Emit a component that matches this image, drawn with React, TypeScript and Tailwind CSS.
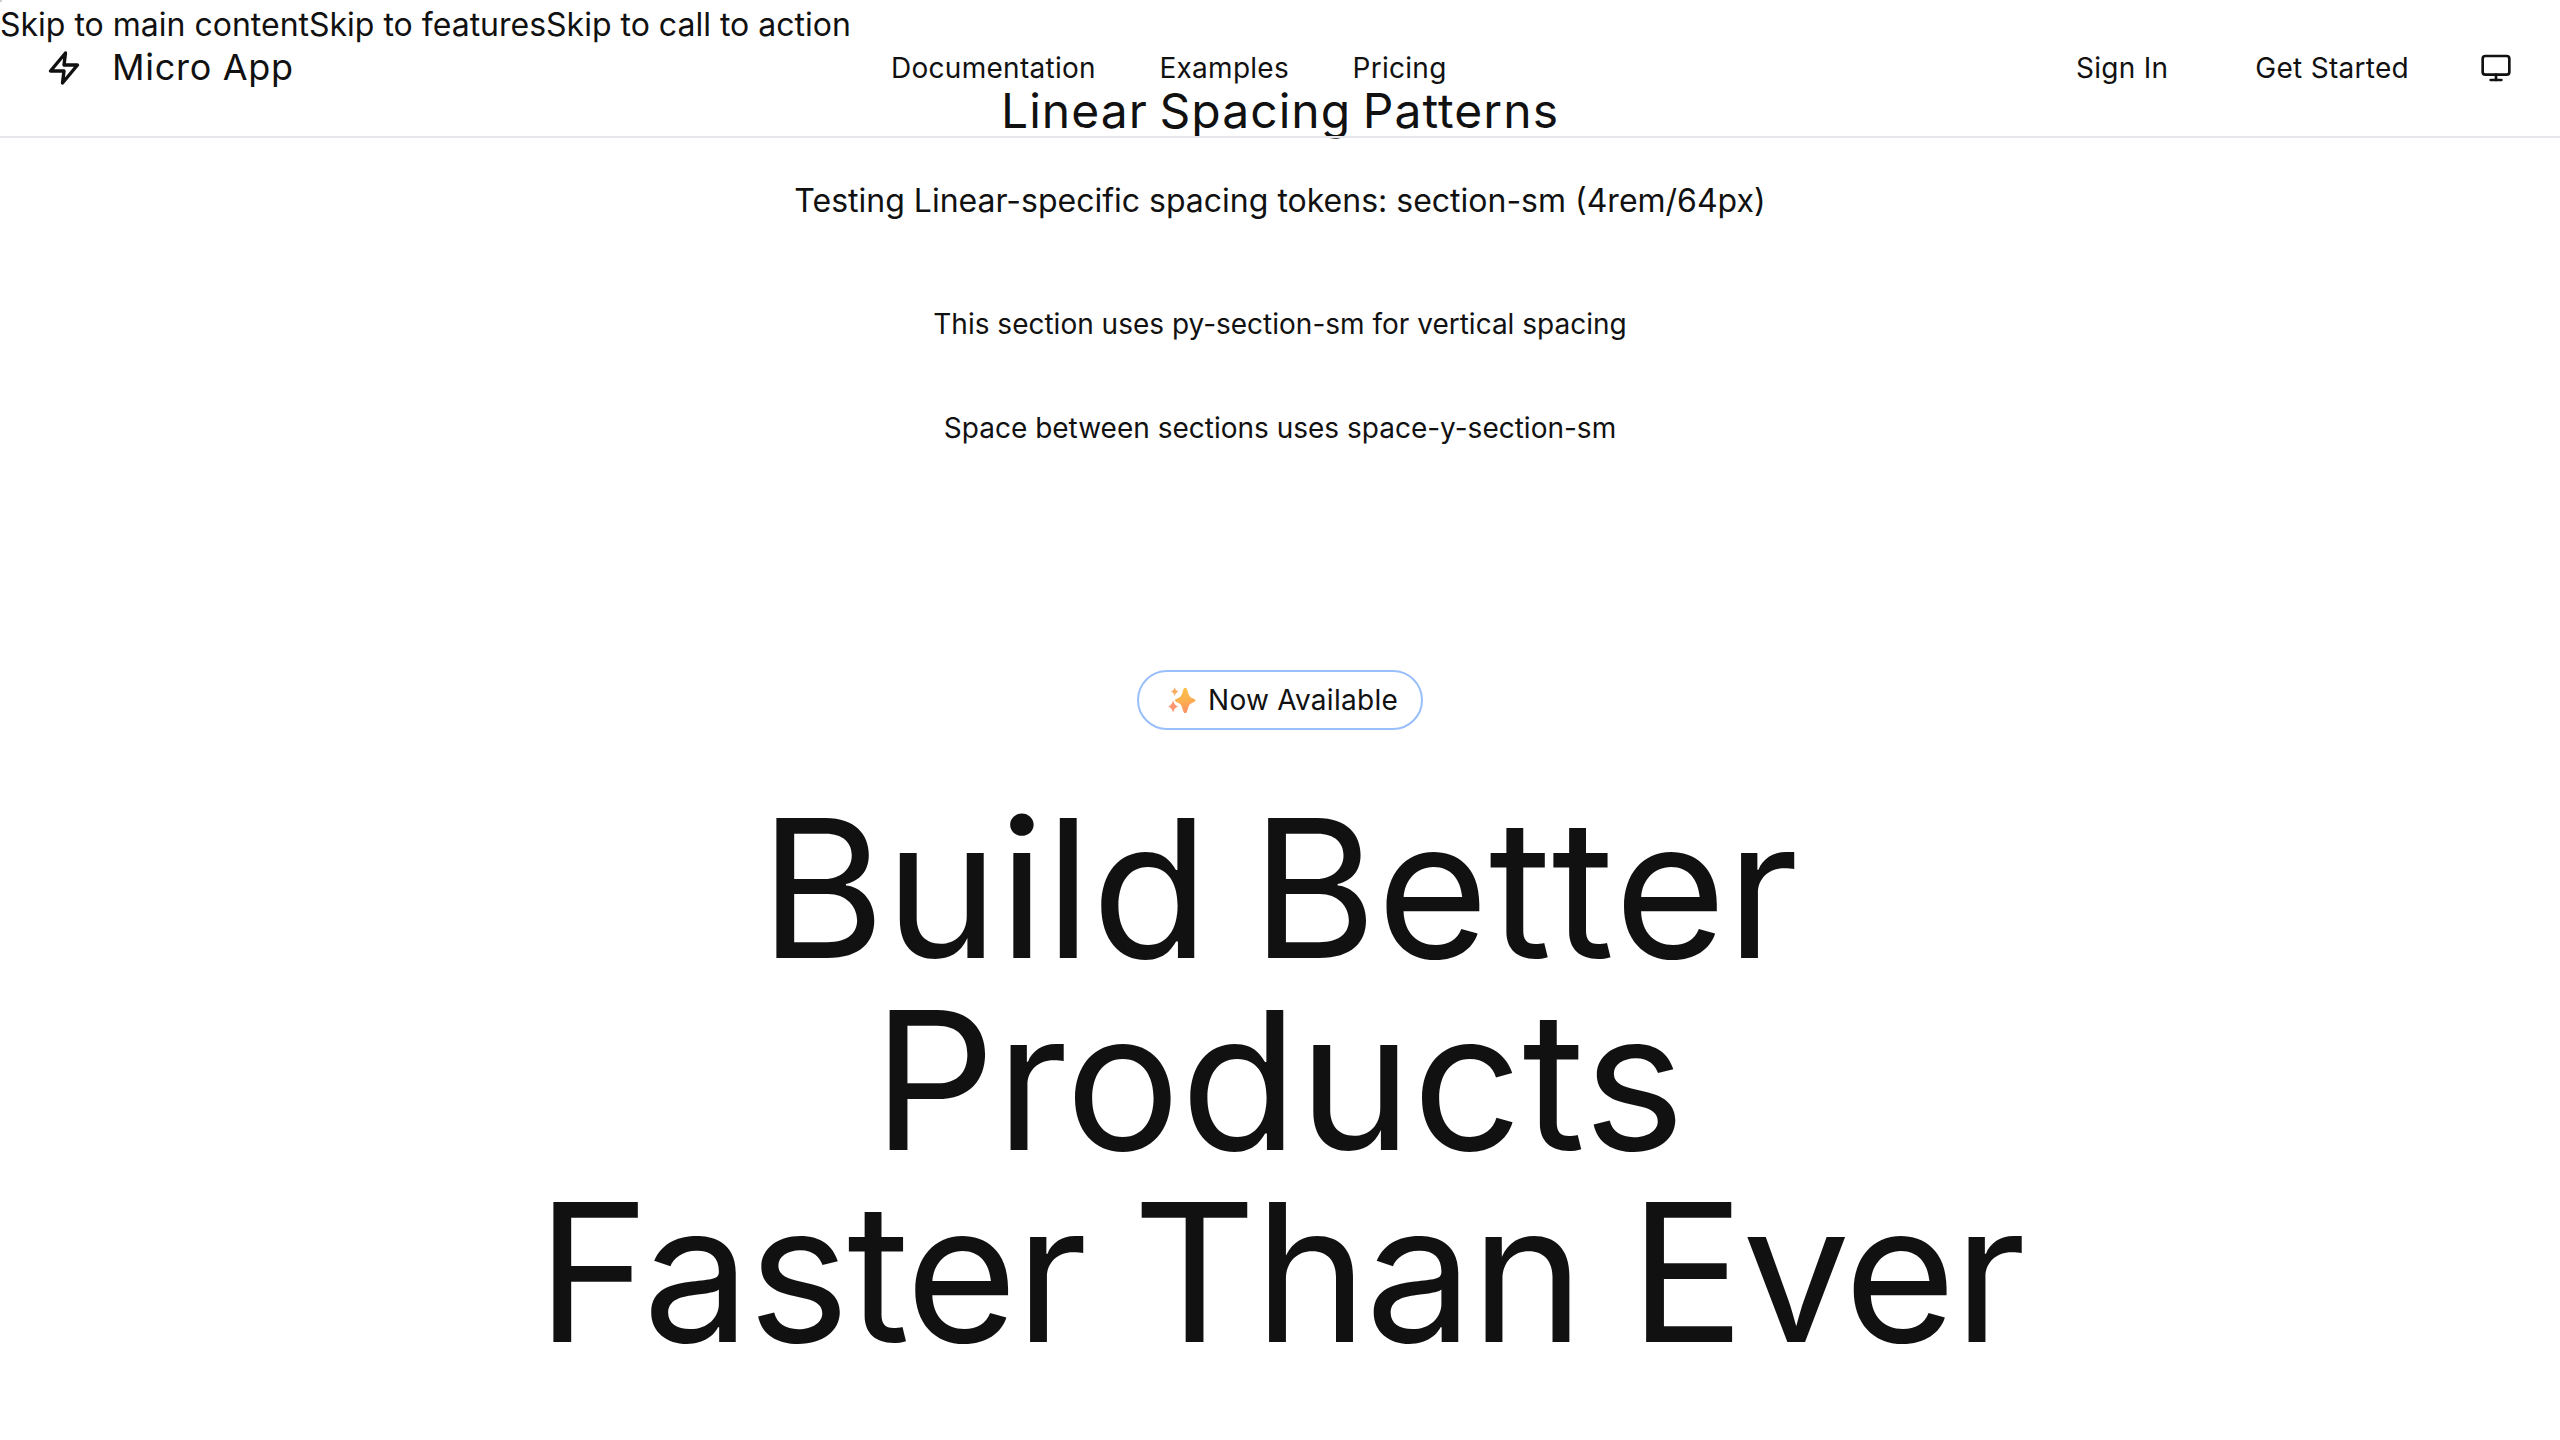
import { Monitor } from "lucide-react";

const skipLinks = ["Skip to main content", "Skip to features", "Skip to call to action"];
const navLinks = ["Documentation", "Examples", "Pricing"];

function BoltIcon() {
  return (
    <svg viewBox="0 0 24 24" className="size-9 shrink-0" fill="none" stroke="currentColor" strokeWidth="2.25" strokeLinecap="round" strokeLinejoin="round" aria-hidden="true">
      <polygon points="13 2 3 14 12 14 11 22 21 10 12 10 13 2" />
    </svg>
  );
}

function SparklesIcon() {
  return (
    <svg viewBox="0 0 28 26" className="h-[26px] w-7 shrink-0" role="img" aria-label="Sparkles">
      <defs>
        <linearGradient id="spark" x1="0.4" y1="0" x2="0.6" y2="1">
          <stop offset="0" stopColor="#fbc04c" />
          <stop offset="0.5" stopColor="#fdb04f" />
          <stop offset="1" stopColor="#fb8d68" />
        </linearGradient>
      </defs>
      <path fill="url(#spark)" d="M17.2 .8C18.5 .8 19 2 19.7 4.4C21 8.8 21.7 9.8 24.3 11C26.4 12 27.5 12.6 27.5 13.4C27.5 14.2 26.4 14.8 24.3 15.8C21.7 17 21 18 19.7 22.4C19 24.8 18.5 26 17.2 26C15.9 26 15.4 24.8 14.7 22.4C13.4 18 12.7 17 10.1 15.8C8 14.8 6.9 14.2 6.9 13.4C6.9 12.6 8 12 10.1 11C12.7 9.8 13.4 8.8 14.7 4.4C15.4 2 15.9 .8 17.2 .8Z" />
      <path fill="#fbab62" d="M6.7 .3C7.5 2.6 8.2 3.7 10.4 4.6C8.2 5.6 7.5 6.7 6.7 8.9C5.9 6.7 5.2 5.6 3 4.6C5.2 3.7 5.9 2.6 6.7 .3Z" />
      <path fill="#fb9670" d="M5.1 13.4C6.1 16.6 7 18.1 10 19.4C7 20.7 6.1 22.2 5.1 25.4C4.1 22.2 3.2 20.7 .2 19.4C3.2 18.1 4.1 16.6 5.1 13.4Z" />
    </svg>
  );
}

function SiteHeader() {
  return (
    <header className="absolute inset-x-0 top-0 z-10 flex h-[138px] items-center border-b-2 border-[#e6e6eb] pr-12 text-[28px] leading-[42px] tracking-[0.01em] whitespace-nowrap">
      <div className="flex w-[891px] items-center gap-[30px] pl-[46px]">
        <BoltIcon />
        <span className="pb-0.5 text-[36px] leading-[54px] tracking-[0.02em]">Micro App</span>
      </div>
      <nav className="flex gap-[63.5px]">
        {navLinks.map((label) => (
          <a key={label}>{label}</a>
        ))}
      </nav>
      <div className="ml-auto flex items-center">
        <a>Sign In</a>
        <a className="ml-[87px]">Get Started</a>
        <Monitor className="ml-[71px] size-8" />
      </div>
    </header>
  );
}

export default function App() {
  return (
    <div className="relative flex h-[1440px] w-full flex-col overflow-hidden bg-white font-['Inter',sans-serif] text-[#111111]">
      <div className="flex h-[87px] shrink-0 pt-px text-[32px] leading-[48px] whitespace-nowrap">
        {skipLinks.map((label) => (
          <a key={label}>{label}</a>
        ))}
      </div>
      <span className="absolute top-0 left-0 size-0.5 bg-[#cfcfcf]" />
      <SiteHeader />

      <section className="text-center">
        <h1 className="text-[48px] leading-[48px] tracking-[1.05px] [word-spacing:-3px]">Linear Spacing Patterns</h1>
        <p className="mt-[42px] text-[32px] leading-[48px]">Testing Linear-specific spacing tokens: section-sm (4rem/64px)</p>
        <p className="mt-[78px] text-[28px] leading-[42px]">This section uses py-section-sm for vertical spacing</p>
        <p className="mt-[62px] text-[28px] leading-[42px]">Space between sections uses space-y-section-sm</p>
      </section>

      <section className="mt-[221px] flex flex-col items-center">
        <div className="flex h-[60px] w-[286px] items-center rounded-full border-2 border-[#99bffd] pl-[29px] text-[28px] leading-[42px] tracking-[0.01em] whitespace-nowrap">
          <SparklesIcon />
          <span className="ml-3">Now Available</span>
        </div>
        <h2 className="mt-[62px] flex flex-col text-center text-[192px] leading-[192px] whitespace-nowrap">
          <span className="mr-[2px] [font-kerning:none] [word-spacing:-12px]">Build Better</span>
          <span className="mr-[2px] tracking-[0.3px]">Products</span>
          <span className="tracking-[-2.4px] [word-spacing:-4px]">Faster Than Ever</span>
        </h2>
      </section>
    </div>
  );
}
